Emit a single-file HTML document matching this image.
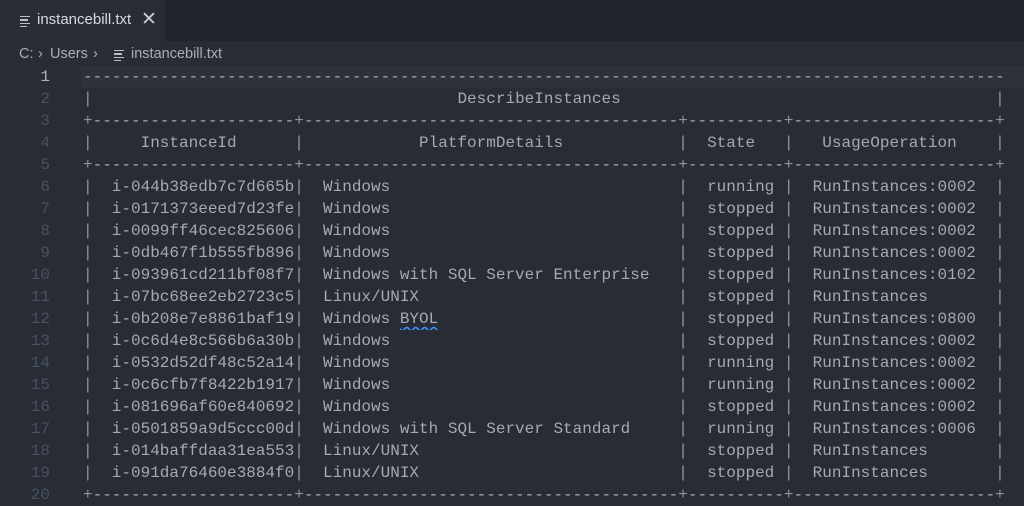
<!DOCTYPE html>
<html><head><meta charset="utf-8"><style>
html,body{margin:0;padding:0;}
body{width:1024px;height:505px;background:#282c34;overflow:hidden;position:relative;font-family:"Liberation Sans",sans-serif;}
.tabbar{position:absolute;left:0;top:0;width:1024px;height:41px;background:#21252b;}
.tab{position:absolute;left:0;top:0;width:165px;height:41px;background:#282c34;}
.tab .t{position:absolute;left:37px;top:11px;font-size:15px;color:#d7dae0;}
.tab .x{position:absolute;left:141px;top:8px;font-size:19px;color:#c8ccd4;}
.ic{position:absolute;width:10px;}
.ic i{display:block;height:1.3px;background:#b8bec9;margin-bottom:2px;}
.bc{position:absolute;top:46px;font-size:14.5px;color:#a9afba;}
.ln{position:absolute;left:0;width:50px;text-align:right;font-family:"Liberation Mono",monospace;font-size:16px;color:#495162;line-height:22px;}
.hl{position:absolute;left:81px;top:66px;width:943px;height:22px;background:#2c313a;}
.code{position:absolute;left:83px;top:66px;font-family:"Liberation Mono",monospace;font-size:16px;line-height:22px;color:#a3aab6;}
.r{height:22px;white-space:nowrap;}
.r span{display:inline-block;vertical-align:top;overflow:hidden;height:22px;white-space:pre;}
.p{width:1ch;color:#8e94a0;}
.a{width:21ch}.b{width:39ch}.c{width:10ch}.d{width:21ch}.f{width:94ch}.w{width:96ch}
.sq{text-decoration:underline wavy #3794ff;text-underline-offset:3px;}
</style></head><body>
<div class="tabbar"><div class="tab">
<div class="ic" style="left:20px;top:16px"><i></i><i style="width:8px"></i><i></i><i style="width:7px"></i></div>
<div class="t">instancebill.txt</div><div class="x">✕</div></div></div>
<div class="bc" style="left:19px">C:</div>
<div class="bc" style="left:38px">›</div>
<div class="bc" style="left:50px">Users</div>
<div class="bc" style="left:93px">›</div>
<div class="ic" style="left:114px;top:50px"><i></i><i style="width:8px"></i><i></i><i style="width:7px"></i></div>
<div class="bc" style="left:131px">instancebill.txt</div>
<div class="hl"></div>
<div class="ln" style="top:66px"><span style="color:#abb2bf">1</span><br>2<br>3<br>4<br>5<br>6<br>7<br>8<br>9<br>10<br>11<br>12<br>13<br>14<br>15<br>16<br>17<br>18<br>19<br>20</div>
<div class="code"><div class="r"><span class="w">----------------------------------------------------------------------------------------------------------------</span></div><div class="r"><span class="p">|</span><span class="f">                                      DescribeInstances</span><span class="p">|</span></div><div class="r"><span class="p">+</span><span class="a">----------------------------------------</span><span class="p">+</span><span class="b">----------------------------------------------</span><span class="p">+</span><span class="c">--------------</span><span class="p">+</span><span class="d">-----------------------------</span><span class="p">+</span></div><div class="r"><span class="p">|</span><span class="a">     InstanceId</span><span class="p">|</span><span class="b">            PlatformDetails</span><span class="p">|</span><span class="c">  State</span><span class="p">|</span><span class="d">   UsageOperation</span><span class="p">|</span></div><div class="r"><span class="p">+</span><span class="a">----------------------------------------</span><span class="p">+</span><span class="b">----------------------------------------------</span><span class="p">+</span><span class="c">--------------</span><span class="p">+</span><span class="d">-----------------------------</span><span class="p">+</span></div><div class="r"><span class="p">|</span><span class="a">  i-044b38edb7c7d665b</span><span class="p">|</span><span class="b">  Windows</span><span class="p">|</span><span class="c">  running</span><span class="p">|</span><span class="d">  RunInstances:0002</span><span class="p">|</span></div><div class="r"><span class="p">|</span><span class="a">  i-0171373eeed7d23fe</span><span class="p">|</span><span class="b">  Windows</span><span class="p">|</span><span class="c">  stopped</span><span class="p">|</span><span class="d">  RunInstances:0002</span><span class="p">|</span></div><div class="r"><span class="p">|</span><span class="a">  i-0099ff46cec825606</span><span class="p">|</span><span class="b">  Windows</span><span class="p">|</span><span class="c">  stopped</span><span class="p">|</span><span class="d">  RunInstances:0002</span><span class="p">|</span></div><div class="r"><span class="p">|</span><span class="a">  i-0db467f1b555fb896</span><span class="p">|</span><span class="b">  Windows</span><span class="p">|</span><span class="c">  stopped</span><span class="p">|</span><span class="d">  RunInstances:0002</span><span class="p">|</span></div><div class="r"><span class="p">|</span><span class="a">  i-093961cd211bf08f7</span><span class="p">|</span><span class="b">  Windows with SQL Server Enterprise</span><span class="p">|</span><span class="c">  stopped</span><span class="p">|</span><span class="d">  RunInstances:0102</span><span class="p">|</span></div><div class="r"><span class="p">|</span><span class="a">  i-07bc68ee2eb2723c5</span><span class="p">|</span><span class="b">  Linux/UNIX</span><span class="p">|</span><span class="c">  stopped</span><span class="p">|</span><span class="d">  RunInstances</span><span class="p">|</span></div><div class="r"><span class="p">|</span><span class="a">  i-0b208e7e8861baf19</span><span class="p">|</span><span class="b">  Windows <u class="sq">BYOL</u></span><span class="p">|</span><span class="c">  stopped</span><span class="p">|</span><span class="d">  RunInstances:0800</span><span class="p">|</span></div><div class="r"><span class="p">|</span><span class="a">  i-0c6d4e8c566b6a30b</span><span class="p">|</span><span class="b">  Windows</span><span class="p">|</span><span class="c">  stopped</span><span class="p">|</span><span class="d">  RunInstances:0002</span><span class="p">|</span></div><div class="r"><span class="p">|</span><span class="a">  i-0532d52df48c52a14</span><span class="p">|</span><span class="b">  Windows</span><span class="p">|</span><span class="c">  running</span><span class="p">|</span><span class="d">  RunInstances:0002</span><span class="p">|</span></div><div class="r"><span class="p">|</span><span class="a">  i-0c6cfb7f8422b1917</span><span class="p">|</span><span class="b">  Windows</span><span class="p">|</span><span class="c">  running</span><span class="p">|</span><span class="d">  RunInstances:0002</span><span class="p">|</span></div><div class="r"><span class="p">|</span><span class="a">  i-081696af60e840692</span><span class="p">|</span><span class="b">  Windows</span><span class="p">|</span><span class="c">  stopped</span><span class="p">|</span><span class="d">  RunInstances:0002</span><span class="p">|</span></div><div class="r"><span class="p">|</span><span class="a">  i-0501859a9d5ccc00d</span><span class="p">|</span><span class="b">  Windows with SQL Server Standard</span><span class="p">|</span><span class="c">  running</span><span class="p">|</span><span class="d">  RunInstances:0006</span><span class="p">|</span></div><div class="r"><span class="p">|</span><span class="a">  i-014baffdaa31ea553</span><span class="p">|</span><span class="b">  Linux/UNIX</span><span class="p">|</span><span class="c">  stopped</span><span class="p">|</span><span class="d">  RunInstances</span><span class="p">|</span></div><div class="r"><span class="p">|</span><span class="a">  i-091da76460e3884f0</span><span class="p">|</span><span class="b">  Linux/UNIX</span><span class="p">|</span><span class="c">  stopped</span><span class="p">|</span><span class="d">  RunInstances</span><span class="p">|</span></div><div class="r"><span class="p">+</span><span class="a">----------------------------------------</span><span class="p">+</span><span class="b">----------------------------------------------</span><span class="p">+</span><span class="c">--------------</span><span class="p">+</span><span class="d">-----------------------------</span><span class="p">+</span></div></div>
</body></html>
